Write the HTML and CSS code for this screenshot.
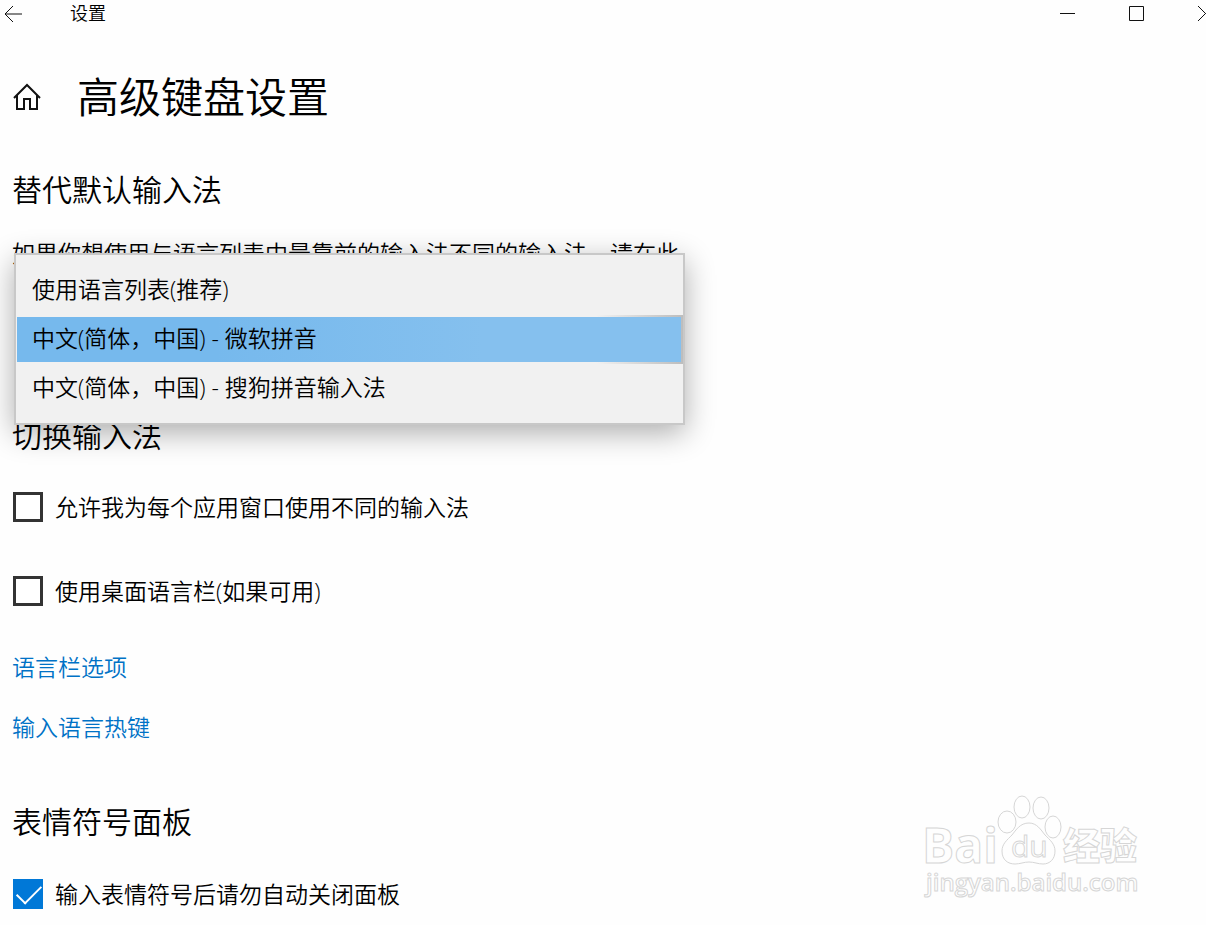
FILE: index.html
```html
<!DOCTYPE html>
<html lang="zh-CN">
<head>
    <meta charset="UTF-8">
    <meta name="viewport" content="width=device-width, initial-scale=1.0">
    <title>设置</title>
    <link rel="stylesheet" href="styles.css">
</head>
<body>
    <header class="titlebar">
        <button class="back" type="button" aria-label="返回">
            <svg width="20" height="18" viewBox="0 0 20 18"><path d="M19 9H2M10 1L2 9l8 8"/></svg>
        </button>
        <span class="titlebar-text">设置</span>
        <div class="window-buttons">
            <button type="button" aria-label="最小化">
                <svg width="15" height="15" viewBox="0 0 15 15"><path d="M0 7.5h15"/></svg>
            </button>
            <button type="button" aria-label="最大化">
                <svg width="15" height="15" viewBox="0 0 15 15"><path d="M.5.5h14v14H.5z"/></svg>
            </button>
            <button class="close" type="button" aria-label="关闭">
                <svg width="8" height="15" viewBox="0 0 8 15"><path d="M0 0l7.500 7.500L0 15M15 0L7.500 7.500 15 15"/></svg>
            </button>
        </div>
    </header>

    <main class="content">
        <div class="page-title">
            <svg class="home" width="30" height="28" viewBox="0 0 30 28"><path d="M2 15L15 2l13 13M5 12v14h7v-10h6v10h7V12"/></svg>
            <h1>高级键盘设置</h1>
        </div>

        <section>
            <h2>替代默认输入法</h2>
            <label class="description" for="inputMethod">如果你想使用与语言列表中最靠前的输入法不同的输入法，请在此</label>
            <div class="dropdown">
                <select class="menu" id="inputMethod" size="3">
                    <option>使用语言列表(推荐)</option>
                    <option selected>中文(简体，中国) - 微软拼音</option>
                    <option>中文(简体，中国) - 搜狗拼音输入法</option>
                </select>
            </div>
        </section>

        <section class="switching">
            <h2>切换输入法</h2>
            <label class="check"><input type="checkbox">允许我为每个应用窗口使用不同的输入法</label>
            <label class="check"><input type="checkbox">使用桌面语言栏(如果可用)</label>
            <a href="#">语言栏选项</a>
            <a href="#">输入语言热键</a>
        </section>

        <section class="emoji">
            <h2>表情符号面板</h2>
            <label class="check"><input type="checkbox" checked>输入表情符号后请勿自动关闭面板</label>
        </section>
    </main>

    <svg class="watermark" width="230" height="112" viewBox="0 0 230 112">
        <text class="wm-bai" x="2" y="73">Bai</text>
        <ellipse cx="87" cy="32" rx="9" ry="11"/>
        <ellipse cx="102" cy="17" rx="8" ry="11"/>
        <ellipse cx="121" cy="18" rx="8" ry="11"/>
        <ellipse cx="133" cy="37" rx="8" ry="11"/>
        <path d="M109 33c-9 0-13 7-17 12-5 5-10 9-10 16 0 9 6 13 13 13 5 0 9-2 14-2s9 2 14 2c7 0 12-5 12-13 0-7-5-11-10-16-4-5-8-12-16-12z"/>
        <text class="wm-du" x="91" y="67">du</text>
        <text class="wm-cn" x="143" y="70">经验</text>
        <text class="wm-url" x="6" y="101">jingyan.baidu.com</text>
    </svg>
</body>
</html>
```
FILE: styles.css
```css
* {
    box-sizing: border-box;
}
body {
    position: relative;
    margin: 0;
    min-height: 100vh;
    background-color: #fefefe;
    color: #000;
    font-family: "Open Sans", "Noto Sans CJK SC", sans-serif;
    font-size: 23px;
    font-weight: 350;
    line-height: 30px;
    overflow-x: hidden;
}
button {
    padding: 0;
    border: none;
    background: none;
}
svg {
    display: block;
    fill: none;
    stroke: #111;
}
h1, h2 {
    margin: 0;
    font-weight: 350;
}
h1 {
    font-size: 42px;
    line-height: 54px;
}
h2 {
    font-size: 30px;
    line-height: 40px;
}

/* title bar */
.titlebar {
    display: flex;
    align-items: center;
    height: 27px;
}
.back {
    width: 70px;
    padding-left: 3px;
}
.titlebar-text {
    font-size: 18px;
    line-height: 27px;
}
.window-buttons {
    display: flex;
    margin-left: auto;
}
.window-buttons button {
    display: flex;
    justify-content: center;
    width: 69px;
}
.window-buttons .close {
    justify-content: flex-end;
    width: 35px;
}

/* page */
.content {
    padding: 43px 13px 14px 12px;
}
.page-title {
    display: flex;
    align-items: center;
    gap: 35px;
    margin-bottom: 46px;
}
.home {
    stroke-width: 2;
}
.description {
    display: block;
    margin-top: 28px;
}

/* open drop-down list */
.dropdown {
    position: relative;
    height: 148px;
}
.menu {
    position: absolute;
    top: -15px;
    left: 2px;
    width: 671px;
    height: 172px;
    padding: 11px 0 0 1px;
    border: 2px solid #c8c8c8;
    border-radius: 0;
    outline: none;
    overflow: hidden;
    background-color: #f1f1f1;
    box-shadow: 0 8px 28px rgba(0, 0, 0, 0.32);
    color: #000;
    font: inherit;
}
.menu option {
    height: 49px;
    padding: 5px 15px 14px;
    font-weight: 350;
    line-height: 30px;
}
.menu option:checked {
    background:
        linear-gradient(90deg, #76b9ed 30%, #85c0ee 70%) 0 2px / calc(100% - 2px) 45px no-repeat,
        linear-gradient(90deg, #f1f1f1 87%, #bdbdbd);
    color: #000;
}

.check {
    display: flex;
    align-items: center;
    gap: 12px;
}
.check input {
    appearance: none;
    width: 30px;
    height: 30px;
    margin: 0 0 0 1px;
    border: 3px solid #333;
    background-color: #fff;
}
.check input:checked {
    border: none;
    background-color: #0078d7;
}
.check input:checked::before {
    content: "";
    display: block;
    width: 22px;
    height: 11px;
    margin: 6px 4px;
    border-left: 2px solid #fff;
    border-bottom: 2px solid #fff;
    transform: rotate(-45deg);
}
.switching {
    display: flex;
    flex-direction: column;
    align-items: flex-start;
}
.switching .check {
    margin: 36px 0 18px;
}
.switching .check + .check {
    margin-bottom: 46px;
}
.switching a {
    margin-bottom: 30px;
    color: #0072c6;
    text-decoration: none;
}
.emoji {
    margin-top: 30px;
}
.emoji .check {
    margin-top: 37px;
}

.watermark {
    position: absolute;
    right: 56px;
    bottom: 23px;
    fill: #fefefe;
    stroke: #d6d6d6;
}
.wm-bai {
    font-size: 48px;
    font-weight: 700;
}
.wm-du {
    font-size: 30px;
    font-weight: 400;
}
.wm-cn {
    font-size: 37px;
    font-weight: 900;
}
.wm-url {
    font-size: 24px;
    font-weight: 600;
}
```
